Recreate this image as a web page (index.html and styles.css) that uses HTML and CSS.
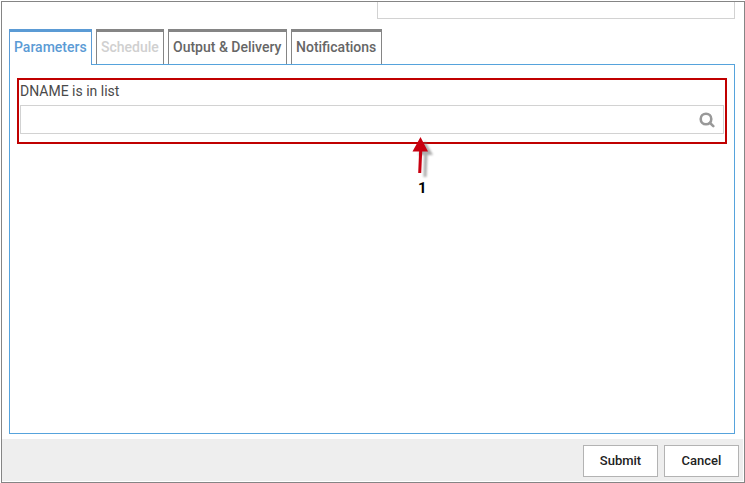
FILE: index.html
```html
<!DOCTYPE html>
<html lang="en">
<head>
<meta charset="utf-8">
<title>Schedule Job</title>
<link rel="stylesheet" href="styles.css">
</head>
<body>
<div class="dialog">
  <main class="content">
    <div class="upper-field"></div>
    <nav class="tabs">
      <div class="tab active">Parameters</div>
      <div class="tab disabled">Schedule</div>
      <div class="tab output">Output &amp; Delivery</div>
      <div class="tab notifications">Notifications</div>
    </nav>
    <section class="panel">
      <div class="highlight">
        <label class="label">DNAME is in list</label>
        <div class="field">
          <svg class="search" width="16" height="16" viewBox="0 0 16 16"><circle cx="7" cy="7" r="5.3" fill="none" stroke="#999" stroke-width="2.6"/><path d="M10.8 10.8L14.3 14.1" stroke="#999" stroke-width="2.6" stroke-linecap="round"/></svg>
        </div>
        <div class="callout">
          <svg width="26" height="46" viewBox="0 0 26 46">
            <path class="shadow" d="M14 5L22 19H16.5L15.5 41H12.5L13 19H7Z"/>
            <path d="M9.5 1L17 15.5H11.2L10.2 37H7.2L8.1 15.5H1.5Z" fill="#c80010"/>
          </svg>
          <span class="number">1</span>
        </div>
      </div>
    </section>
  </main>
  <footer class="actions">
    <div class="button">Submit</div>
    <div class="button">Cancel</div>
  </footer>
</div>
</body>
</html>
```
FILE: styles.css
```css
* { box-sizing: border-box; }
body {
  margin: 0;
  padding: 1px 0 0 1px;
  background: #fff;
  font-family: Roboto, sans-serif;
  font-size: 14px;
  color: #4a4a4a;
  overflow: hidden;
}
.dialog {
  width: 744px;
  height: 482px;
  border: 1px solid #858585;
  display: flex;
  flex-direction: column;
}
.content {
  height: 437px;
  padding: 0 9px 5px 7px;
  display: flex;
  flex-direction: column;
}
.upper-field {
  width: 358px;
  height: 17px;
  margin-left: auto;
  border: 1px solid #d2d2d2;
  border-top: 0;
}
.tabs {
  display: flex;
  gap: 4px;
  height: 36px;
  margin: 10px 0 -1px;
}
.tab {
  height: 35px;
  border: 1px solid #858585;
  border-top-width: 3px;
  border-bottom: 0;
  padding: 6px 0 0 4px;
  line-height: 18px;
  font-weight: 500;
  white-space: nowrap;
  color: #666;
  width: 68px;
}
.tab.active {
  width: 83px;
  height: 36px;
  border-color: #5b9bd5;
  color: #5b9bd5;
  background: #fff;
  position: relative;
}
.tab.disabled { color: #d0d0d0; }
.tab.output { width: 119px; }
.tab.notifications { width: 91px; }
.panel {
  flex: 1;
  width: 726px;
  border: 1px solid #56a3dc;
  padding: 13px 7px;
}
.highlight {
  height: 66px;
  border: 2px solid #c00000;
  padding: 2px 1px 0;
  position: relative;
}
.label {
  display: block;
  height: 23px;
  line-height: 18px;
}
.field {
  height: 29px;
  border: 1px solid #d2d2d2;
  display: flex;
  align-items: center;
  justify-content: flex-end;
  padding-right: 8px;
}
.search { display: block; }
.callout {
  position: absolute;
  left: 392px;
  top: 56px;
  width: 26px;
}
.callout svg { display: block; }
.shadow {
  fill: #777;
  opacity: .6;
  filter: blur(1.3px);
}
.number {
  display: block;
  margin-top: -3px;
  padding-left: 7px;
  font: bold 15px/18px Roboto, sans-serif;
  color: #000;
}
.actions {
  height: 42px;
  margin-right: 1px;
  background: #eee;
  display: flex;
  justify-content: flex-end;
  gap: 6px;
  padding: 6px 4px 4px 0;
}
.button {
  width: 75px;
  height: 32px;
  border: 1px solid #b3b3b3;
  background: #fff;
  font-size: 13px;
  font-weight: 500;
  line-height: 30px;
  text-align: center;
  color: #222;
}
```
